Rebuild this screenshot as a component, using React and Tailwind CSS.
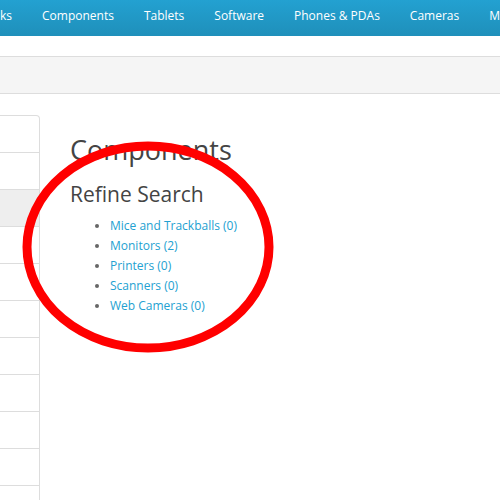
import React from "react";

const navItems = ["Components", "Tablets", "Software", "Phones & PDAs", "Cameras", "MP3 Players"];
const refine = ["Mice and Trackballs (0)", "Monitors (2)", "Printers (0)", "Scanners (0)", "Web Cameras (0)"];

const App = () => {
  return (
    <div className="relative w-[500px] h-[500px] overflow-hidden bg-white font-['Open_Sans',sans-serif] text-[#666]">
      {/* Menu */}
      <nav className="h-[36px] pb-[3px] bg-gradient-to-b from-[#23a1d1] to-[#1f90bb] border-b border-[#1f90bb] flex items-center text-white text-[12px] whitespace-nowrap">
        <div className="w-[27px] shrink-0 flex justify-end overflow-hidden">
          <span className="pr-[15px]">Laptops &amp; Notebooks</span>
        </div>
        {navItems.map((item) => (
          <span key={item} className="px-[15px] shrink-0">
            {item}
          </span>
        ))}
      </nav>

      {/* Breadcrumb */}
      <div className="mt-[20px] h-[38px] bg-[#f5f5f5] border-y border-[#ddd]" />

      <div className="flex mt-[21px]">
        {/* Left column */}
        <div className="w-[40px] shrink-0 border border-l-0 border-[#ddd] rounded-tr-[4px]">
          {Array.from({ length: 11 }).map((_, i) => (
            <div
              key={i}
              className={`h-[37px] border-b border-[#ddd] ${i === 2 ? "bg-[#eeeeee]" : ""}`}
            />
          ))}
        </div>

        {/* Content */}
        <div className="pl-[30px] pt-[15px]">
          <h2 className="text-[27px] leading-[40px] text-[#444]">Components</h2>
          <h3 className="mt-[9px] text-[21px] leading-[30px] text-[#444]">Refine Search</h3>
          <ul className="mt-[7px] pl-[40px] list-disc text-[12px] leading-[20px]">
            {refine.map((r) => (
              <li key={r} className="text-[#666]">
                <a href="#" className="text-[#23a1d1]">{r}</a>
              </li>
            ))}
          </ul>
        </div>
      </div>

      {/* Red annotation circle */}
      <svg className="absolute left-0 top-0 pointer-events-none" width="500" height="500">
        <ellipse cx="148" cy="247" rx="121" ry="101" fill="none" stroke="#ff0000" strokeWidth="9" />
      </svg>
    </div>
  );
};

export default App;
